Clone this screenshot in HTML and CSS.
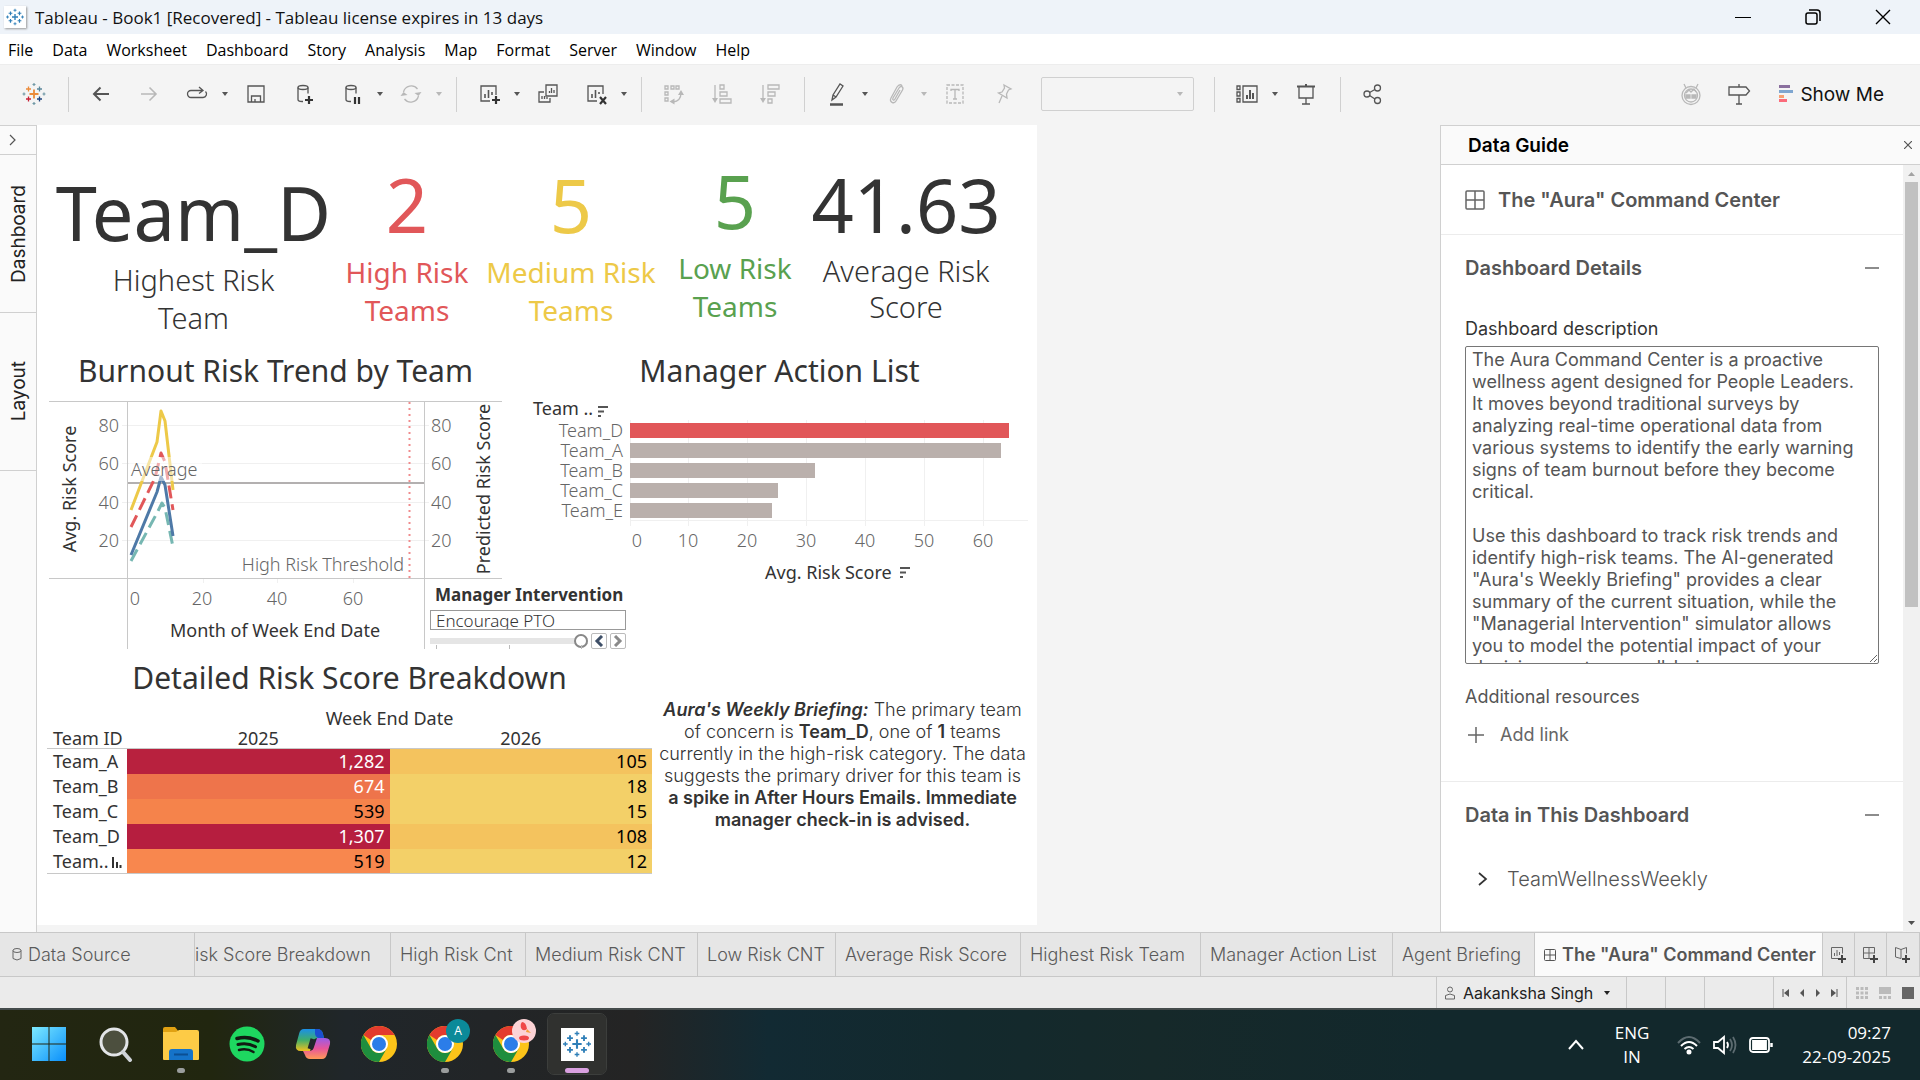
FILE: index.html
```html
<!DOCTYPE html>
<html lang="en">
<head>
<meta charset="utf-8">
<title>Tableau - Book1</title>
<link rel="stylesheet" href="styles.css">
</head>
<body>
<svg class="defs" aria-hidden="true">
  <symbol id="mark" viewBox="0 0 24 24">
    <g fill="none" stroke="currentColor" stroke-width="1.6">
      <path d="M12 8v8M8 12h8" stroke-width="1.8"/>
      <path d="M6 4.5v5M3.500 7h5M18 4.500v5M15.500 7h5M6 14.500v5M3.500 17h5M18 14.500v5M15.500 17h5"/>
      <path d="M12 1v4M10 3h4M12 19v4M10 21h4M2 10v4M0 12h4M22 10v4M20 12h4" stroke-width="1.2"/>
    </g>
  </symbol>
  <symbol id="caret" viewBox="0 0 12 12"><path d="M3 4h6L6 8z" fill="currentColor"/></symbol>
  <symbol id="chrome" viewBox="0 0 36 36">
    <circle cx="18" cy="18" r="18" fill="#fcc419"/>
    <path d="M2.400 9A18 18 0 0 1 33.600 9H18a9 9 0 0 0-8 5z" fill="#e33b2e"/>
    <path d="M2.400 9A18 18 0 0 0 18 36l7.800-13.500A9 9 0 0 1 10.200 22.500z" fill="#1e8e3e"/>
    <circle cx="18" cy="18" r="9" fill="#fff"/><circle cx="18" cy="18" r="7" fill="#2b7de9"/>
  </symbol>
</svg>

<header class="titlebar">
  <span class="app-icon"><svg width="18" height="18"><use href="#mark"/></svg></span>
  <span class="title">Tableau - Book1 [Recovered] - Tableau license expires in 13 days</span>
  <div class="win-buttons">
    <button aria-label="Minimize"><svg width="16" height="16"><path d="M0 8.500h16" stroke="#000"/></svg></button>
    <button aria-label="Restore"><svg width="16" height="16" fill="none" stroke="#000" stroke-width="1.500"><rect x="1" y="4" width="11" height="11" rx="2"/><path d="M4 1h8a3 3 0 0 1 3 3v8"/></svg></button>
    <button aria-label="Close"><svg width="16" height="16"><path d="M1 1l14 14M15 1L1 15" stroke="#000" stroke-width="1.400"/></svg></button>
  </div>
</header>

<nav class="menubar">
  <button>File</button><button>Data</button><button>Worksheet</button><button>Dashboard</button><button>Story</button><button>Analysis</button><button>Map</button><button>Format</button><button>Server</button><button>Window</button><button>Help</button>
</nav>

<div class="toolbar">
  <div class="group first">
    <button aria-label="Start page"><svg viewBox="0 0 24 24" fill="none" stroke-width="1.600"><path d="M12 7.500v9M7.500 12h9" stroke="#eb8b3a" stroke-width="1.800"/><path d="M6.500 4.500v5M4 7h5" stroke="#eb8b3a"/><path d="M17.500 4.500v5M15 7h5" stroke="#5b879b"/><path d="M6.500 14.500v5M4 17h5" stroke="#c72035"/><path d="M17.500 14.500v5M15 17h5" stroke="#1f447e"/><path d="M12 1v3M10.500 2.500h3M12 20v3M10.500 21.500h3M22 10.500v3M20.500 12h3M2 10.500v3M.500 12h3" stroke="#7199a6" stroke-width="1.200"/></svg></button>
  </div>
  <div class="group">
    <button aria-label="Undo"><svg viewBox="0 0 24 24"><path d="M20 12H5M11.500 5.500L5 12l6.500 6.500" stroke-width="2"/></svg></button>
    <button class="off" aria-label="Redo"><svg viewBox="0 0 24 24"><path d="M4 12h15M12.500 5.500L19 12l-6.500 6.500" stroke-width="1.600"/></svg></button>
    <button class="drop" aria-label="Replay"><svg viewBox="0 0 24 24"><path d="M7 15.500H6a3.500 3.500 0 0 1 0-7h11M7 15.500h11a3.500 3.500 0 0 0 2.500-6M14 5l4 3.500-4 3"/></svg><svg class="caret"><use href="#caret"/></svg></button>
    <button aria-label="Save"><svg viewBox="0 0 24 24"><path d="M4 4h16v16H4zM7.500 20v-6h9v6M11 20v-3"/></svg></button>
    <button aria-label="New data source"><svg viewBox="0 0 24 24"><path d="M6 5.500v12c0 1.200 2 2 4 2h1M16 5.500v6"/><ellipse cx="11" cy="5.500" rx="5" ry="2"/><path d="M17 14v8M13 18h8" class="heavy"/></svg></button>
    <button class="drop" aria-label="Pause updates"><svg viewBox="0 0 24 24"><path d="M6 5.500v12c0 1.200 2 2 4 2h1M16 5.500v6"/><ellipse cx="11" cy="5.500" rx="5" ry="2"/><path d="M15 15v7M19 15v7" class="heavy"/></svg><svg class="caret"><use href="#caret"/></svg></button>
    <button class="drop off" aria-label="Refresh"><svg viewBox="0 0 24 24"><path d="M4.500 10a8 8 0 0 1 14-3M19.500 14a8 8 0 0 1-14 3"/><path d="M1.500 14l3-4 4 3zM22.500 10l-3 4-4-3z" fill="currentColor" stroke="none"/></svg><svg class="caret"><use href="#caret"/></svg></button>
  </div>
  <div class="group">
    <button class="drop" aria-label="New worksheet"><svg viewBox="0 0 24 24"><path d="M13 19H4V4h15v9"/><path d="M8 16v-4M11.500 16V8M15 13v-3" stroke-width="1.600"/><path d="M19 14v8M15 18h8" class="heavy"/></svg><svg class="caret"><use href="#caret"/></svg></button>
    <button aria-label="Duplicate sheet"><svg viewBox="0 0 24 24"><path d="M10 3h11v11H10zM8 10H3v10h11v-4M13.500 11V9M15.500 11V6M18 11V8M6 17v-3M8.500 17v-3M11 17v-2"/></svg></button>
    <button class="drop" aria-label="Clear sheet"><svg viewBox="0 0 24 24"><path d="M13 19H4V4h15v8"/><path d="M8 16v-4M11.500 16V8M15 12v-2" stroke-width="1.600"/><path d="M16 15l6 7M22 15l-6 7" class="heavy"/></svg><svg class="caret"><use href="#caret"/></svg></button>
  </div>
  <div class="group">
    <button class="off" aria-label="Swap rows and columns"><svg viewBox="0 0 24 24"><path d="M3 4h3v3H3zM9 4h3v3H9zM14 4h3v3h-3zM3 10h3v3H3zM3 16h3v3H3zM19 11q0 8-8 9"/><path d="M19 8l-3 5h6zM7.500 19.500l5-3v6z" fill="currentColor" stroke="none"/></svg></button>
    <button class="off" aria-label="Sort ascending"><svg viewBox="0 0 24 24"><path d="M5 3v14M10 3h4v4h-4zM10 10h7v4h-7zM10 17h11v4H10z"/><path d="M2 16h6l-3 5z" fill="currentColor" stroke="none"/></svg></button>
    <button class="off" aria-label="Sort descending"><svg viewBox="0 0 24 24"><path d="M5 3v14M10 3h11v4H10zM10 10h7v4h-7zM10 17h4v4h-4z"/><path d="M2 16h6l-3 5z" fill="currentColor" stroke="none"/></svg></button>
  </div>
  <div class="group">
    <button class="drop" aria-label="Highlight"><svg viewBox="0 0 24 24"><path d="M7 18l1-5 7-11 3 2-7 11zM8 13l3 2"/><path d="M5 22.500h13" stroke-width="2.500"/></svg><svg class="caret"><use href="#caret"/></svg></button>
    <button class="drop off" aria-label="Group members"><svg viewBox="0 0 24 24"><path d="M9 16l6-10c2-3 5-1 3.500 2L12 19c-2 3.500-7 1-5-3l6-11c2-3 5-3 5 0M9 16c-1 2 1 3 2 1l5-9"/></svg><svg class="caret"><use href="#caret"/></svg></button>
    <button class="off" aria-label="Show mark labels"><svg viewBox="0 0 24 24"><path d="M4 3h16v18H4z" stroke-dasharray="3 1.500"/><path d="M8 9V7.500h8V9M12 7.500V17M10 17h4"/></svg></button>
    <button class="off" aria-label="Fix axes"><svg viewBox="0 0 24 24"><path d="M13 3l7 4-2.500 1-2 4 .500 4-8.500-5 3.500-1 2.500-4zM11 14l-3 7"/></svg></button>
    <button class="fit off" aria-label="Fit"><svg class="caret"><use href="#caret"/></svg></button>
  </div>
  <div class="group">
    <button class="drop" aria-label="Show or hide cards"><svg viewBox="0 0 24 24"><path d="M2 4h3v3.500H2zM2 10h3v4H2zM2 16.500h3V20H2zM8 4h14v16H8z"/><path d="M12 17v-4M15 17V8M18 17v-6" stroke-width="2"/></svg><svg class="caret"><use href="#caret"/></svg></button>
    <button aria-label="Presentation mode"><svg viewBox="0 0 24 24"><path d="M5 5v11h14V5M12 16v6M8 22h8"/><path d="M3 4.500h18M12 2v2" stroke-width="2"/></svg></button>
  </div>
  <div class="group last">
    <button aria-label="Share"><svg viewBox="0 0 24 24"><circle cx="6" cy="12" r="3"/><circle cx="16.500" cy="6" r="3"/><circle cx="16.500" cy="18.500" r="3"/><path d="M8.600 10.500l5.300-3M8.600 13.500l5.300 3.500"/></svg></button>
  </div>
  <div class="right">
    <button class="off" aria-label="Assistant"><svg viewBox="0 0 24 24"><circle cx="12" cy="13.500" r="9"/><circle cx="12" cy="13.500" r="6.500"/><path d="M5 2l2 4M19 2l-2 4M7 11l3-3 2 2 3-3 2 3"/><path d="M7 13h4v3H7zM13 13h4v3h-4z" fill="currentColor"/></svg></button>
    <button aria-label="Guidance"><svg viewBox="0 0 24 24"><path d="M2 5h17l3.500 4-3.500 4H2zM12 2v3M12 13v9M9 22h6"/></svg></button>
    <button class="showme"><svg viewBox="0 0 14 18"><path d="M0 0h11v3H0z" fill="#8a6f9e"/><path d="M0 5h14v3H0z" fill="#7fa6d0"/><path d="M0 10h5v3H0z" fill="#f7a072"/><path d="M0 14h8v3H0z" fill="#fb6b7b"/></svg>Show Me</button>
  </div>
</div>

<main class="workspace">
  <aside class="rail">
    <button class="expand" aria-label="Expand pane"><svg width="8" height="12" fill="none" stroke="#555" stroke-width="1.200"><path d="M1 1l5 5-5 5"/></svg></button>
    <button class="side-tab"><span>Dashboard</span></button>
    <button class="side-tab"><span>Layout</span></button>
  </aside>

  <section class="canvas">
    <div class="dashboard">
      <div class="kpis">
        <div class="kpi low-set light"><strong>Team_D</strong><span>Highest Risk<br>Team</span></div>
        <div class="kpi red"><strong>2</strong><span>High Risk<br>Teams</span></div>
        <div class="kpi yellow"><strong>5</strong><span>Medium Risk<br>Teams</span></div>
        <div class="kpi high-set green"><strong>5</strong><span>Low Risk<br>Teams</span></div>
        <div class="kpi light"><strong>41.63</strong><span>Average Risk<br>Score</span></div>
      </div>

      <div class="charts">
        <section class="trend">
          <h2>Burnout Risk Trend by Team</h2>
          <svg class="chart" viewBox="0 0 453 248">
            <g stroke="#f0f0f0"><path d="M73 24.500h307M73 62.500h307M73 101.500h307M73 139.500h307M154.500 178v4M228.500 178v4M304.500 178v4"/></g>
            <g class="frame"><path d="M0 .500h453M0 177.500h453M78.500 0v248M375.500 0v248"/></g>
            <path d="M79 82h296" stroke="#b3b0b0" stroke-width="2"/>
            <g class="lines">
              <path d="M82 160L108 112L113 102L116 107L124 146" stroke="#76b7b2" stroke-dasharray="13 6"/>
              <path d="M82 154L108 91L112 76L116 84L124 135" stroke="#4e79a7"/>
              <path d="M82 126L106 77L112 52L116 61L124 109" stroke="#e15759" stroke-dasharray="13 6"/>
              <path d="M82 109L108 41L112 10L116 20L124 89" stroke="#edc948"/>
            </g>
            <path d="M360.500 1v176" stroke="#f08c8d" stroke-width="2" stroke-dasharray="2 4"/>
            <path d="M80 56h73v24H80z" fill="#fff" opacity=".5"/>
            <g class="tick">
              <text x="82" y="75">Average</text>
              <text x="355" y="170" text-anchor="end">High Risk Threshold</text>
              <g text-anchor="end"><text x="70" y="31">80</text><text x="70" y="69">60</text><text x="70" y="108">40</text><text x="70" y="146">20</text></g>
              <text x="382" y="31">80</text><text x="382" y="69">60</text><text x="382" y="108">40</text><text x="382" y="146">20</text>
              <g text-anchor="middle"><text x="86" y="204">0</text><text x="153" y="204">20</text><text x="228" y="204">40</text><text x="304" y="204">60</text></g>
            </g>
            <g class="axis" text-anchor="middle">
              <text x="226" y="236">Month of Week End Date</text>
              <text transform="translate(27 88) rotate(-90)">Avg. Risk Score</text>
              <text transform="translate(441 88) rotate(-90)">Predicted Risk Score</text>
            </g>
          </svg>
          <form class="param">
            <label for="intervention">Manager Intervention</label>
            <input class="value" id="intervention" type="text" value="Encourage PTO">
            <div class="slide">
              <input type="range" min="0" max="2" value="2" aria-label="Manager Intervention step">
              <button type="button" aria-label="Previous"><svg width="10" height="12"><path d="M8 1L3 6l5 5" stroke="#3f5068"/></svg></button>
              <button type="button" aria-label="Next"><svg width="10" height="12"><path d="M2 1l5 5-5 5" stroke="#8a8a8a"/></svg></button>
            </div>
            <svg class="ticks" width="196" height="4"><path d="M6.500 0v4M79.500 0v4M151.500 0v4" stroke="#bbb"/></svg>
          </form>
        </section>

        <section class="actions">
          <h2>Manager Action List</h2>
          <svg class="chart" viewBox="0 0 499 185">
            <g stroke="#f0f0f0"><path d="M100.500 19v106M158.500 19v106M217.500 19v106M276.500 19v106M335.500 19v106M394.500 19v106M453.500 19v106M100 119.500h398"/></g>
            <path d="M100 22h379v15H100z" fill="#e15759"/>
            <path d="M100 42h371v15H100zM100 62h185v15H100zM100 82h148v15H100zM100 102h142v15H100z" fill="#bab0ac"/>
            <g class="tick" text-anchor="end"><text x="93" y="36">Team_D</text><text x="93" y="56">Team_A</text><text x="93" y="76">Team_B</text><text x="93" y="96">Team_C</text><text x="93" y="116">Team_E</text></g>
            <g class="tick" text-anchor="middle"><text x="107" y="146">0</text><text x="158" y="146">10</text><text x="217" y="146">20</text><text x="276" y="146">30</text><text x="335" y="146">40</text><text x="394" y="146">50</text><text x="453" y="146">60</text></g>
            <g class="axis"><text x="3" y="14">Team ..</text><text x="235" y="178">Avg. Risk Score</text></g>
            <path d="M68 6h10M68 10.500h6M68 15h3M370 167h10M370 171.500h6M370 176h3" stroke="#555" stroke-width="2"/>
          </svg>
        </section>
      </div>

      <div class="details">
        <section>
          <h2>Detailed Risk Score Breakdown</h2>
          <table>
            <colgroup><col class="c-team"><col><col></colgroup>
            <thead>
              <tr><td></td><th colspan="2">Week End Date</th></tr>
              <tr><th class="team">Team ID</th><th>2025</th><th>2026</th></tr>
            </thead>
            <tbody>
              <tr><th>Team_A</th><td class="s5">1,282</td><td class="s1">105</td></tr>
              <tr><th>Team_B</th><td class="s4">674</td><td class="s0">18</td></tr>
              <tr><th>Team_C</th><td class="s3">539</td><td class="s0">15</td></tr>
              <tr><th>Team_D</th><td class="s6">1,307</td><td class="s1">108</td></tr>
              <tr><th>Team..<svg width="11" height="12"><path d="M2 1v11M6 6v6M9.500 9v3" stroke="#333" stroke-width="2"/></svg></th><td class="s2">519</td><td class="s0">12</td></tr>
            </tbody>
          </table>
        </section>
        <p class="briefing"><b><i>Aura's Weekly Briefing:</i></b> The primary team<br>of concern is <b>Team_D</b>, one of <b>1</b> teams<br>currently in the high-risk category. The data<br>suggests the primary driver for this team is<br><b>a spike in After Hours Emails. Immediate<br>manager check-in is advised.</b></p>
      </div>
    </div>
  </section>

  <aside class="guide">
    <header><h2>Data Guide</h2><button aria-label="Close Data Guide"><svg width="8" height="8"><path d="M0 0l8 8M8 0L0 8" stroke="#555" stroke-width="1.200"/></svg></button></header>
    <div class="guide-main">
      <div class="guide-body">
        <div class="guide-name"><svg width="20" height="20" fill="none" stroke="#666" stroke-width="1.500"><rect x="1" y="1" width="18" height="18" rx="1"/><path d="M10 1v18M1 10h18"/></svg><h3>The "Aura" Command Center</h3></div>
        <section class="block">
          <div class="head"><h3>Dashboard Details</h3><button aria-label="Collapse details"><svg width="14" height="2"><path d="M0 1h14" stroke="#666" stroke-width="1.500"/></svg></button></div>
          <label for="desc">Dashboard description</label>
          <textarea id="desc">The Aura Command Center is a proactive
wellness agent designed for People Leaders.
It moves beyond traditional surveys by
analyzing real-time operational data from
various systems to identify the early warning
signs of team burnout before they become
critical.

Use this dashboard to track risk trends and
identify high-risk teams. The AI-generated
"Aura's Weekly Briefing" provides a clear
summary of the current situation, while the
"Managerial Intervention" simulator allows
you to model the potential impact of your
decisions on team well-being.</textarea>
          <h4>Additional resources</h4>
          <button class="add"><svg width="18" height="18"><path d="M9 1v16M1 9h16" stroke="#666" stroke-width="1.500"/></svg>Add link</button>
        </section>
        <section class="block">
          <div class="head"><h3>Data in This Dashboard</h3><button aria-label="Collapse data"><svg width="14" height="2"><path d="M0 1h14" stroke="#666" stroke-width="1.500"/></svg></button></div>
          <button class="source"><svg width="10" height="14" fill="none"><path d="M1 1l7 6-7 6" stroke="#333" stroke-width="1.700"/></svg>TeamWellnessWeekly</button>
        </section>
      </div>
      <div class="scroll" aria-hidden="true">
        <svg width="17" height="17"><path d="M5 11h7L8.500 7z" fill="#a3a3a3"/></svg>
        <div class="track"><div class="thumb"></div></div>
        <svg width="17" height="17"><path d="M5 6h7l-3.500 4z" fill="#505050"/></svg>
      </div>
    </div>
  </aside>
</main>

<nav class="sheets">
  <button><svg width="10" height="16" fill="none" stroke="#666"><path d="M1 3.500v8q4 3 8 0v-8"/><ellipse cx="5" cy="3.500" rx="4" ry="2"/></svg>Data Source</button>
  <button class="cut">isk Score Breakdown</button>
  <button>High Risk Cnt</button>
  <button>Medium Risk CNT</button>
  <button>Low Risk CNT</button>
  <button>Average Risk Score</button>
  <button>Highest Risk Team</button>
  <button>Manager Action List</button>
  <button>Agent Briefing</button>
  <button class="active"><svg width="12" height="12" fill="none" stroke="#555"><rect x=".500" y=".500" width="11" height="11" rx="1"/><path d="M6 0v12M0 6h12"/></svg>The "Aura" Command Center</button>
  <button class="new" aria-label="New worksheet"><svg width="18" height="18" fill="none" stroke="#666"><path d="M9 12.500H2.500v-11h11v6M5.500 10V7M8 10V4M10.500 9V6"/><path d="M13 9v8M9 13h8" stroke="#444" stroke-width="2"/></svg></button>
  <button class="new" aria-label="New dashboard"><svg width="18" height="18" fill="none" stroke="#666"><path d="M9 12.500H2.500v-11h11v6M8 1.500v11M2.500 7h11"/><path d="M13 9v8M9 13h8" stroke="#444" stroke-width="2"/></svg></button>
  <button class="new" aria-label="New story"><svg width="18" height="18" fill="none" stroke="#666"><path d="M8 12.500L2.500 11V1.500L8 3.500l5.500-2v6M8 3.500v9"/><path d="M13 9v8M9 13h8" stroke="#444" stroke-width="2"/></svg></button>
</nav>

<div class="status">
  <button class="user"><svg width="10" height="14" fill="none" stroke="#666"><circle cx="5" cy="3.500" r="2.500"/><path d="M.500 13V9.500q4.500-3 9 0V13z"/></svg>Aakanksha Singh<svg class="caret"><use href="#caret"/></svg></button>
  <span class="s-cell"></span><span class="s-cell"></span><span class="m-cell"></span>
  <div class="pager">
    <button aria-label="First"><svg width="8" height="8"><path d="M1 0v8" stroke="#555"/><path d="M7 0v8L2 4z"/></svg></button>
    <button aria-label="Previous"><svg width="8" height="8"><path d="M6 0v8L2 4z"/></svg></button>
    <button aria-label="Next"><svg width="8" height="8"><path d="M2 0v8l4-4z"/></svg></button>
    <button aria-label="Last"><svg width="8" height="8"><path d="M7 0v8" stroke="#555"/><path d="M1 0v8l5-4z"/></svg></button>
  </div>
  <div class="views">
    <button aria-label="Grid view"><svg width="12" height="12" fill="#bbb"><path d="M0 0h3v3H0zM4.500 0h3v3h-3zM9 0h3v3H9zM0 4.500h3v3H0zM4.500 4.500h3v3h-3zM9 4.500h3v3H9zM0 9h3v3H0zM4.500 9h3v3h-3zM9 9h3v3H9z"/></svg></button>
    <button aria-label="Filmstrip view"><svg width="12" height="12" fill="#bbb"><path d="M0 0h12v7H0zM0 9h3v3H0zM4.500 9h3v3h-3zM9 9h3v3H9z"/></svg></button>
    <button aria-label="Sheet view"><svg width="12" height="12" fill="#666"><path d="M0 0h12v12H0z"/></svg></button>
  </div>
</div>

<footer class="taskbar">
  <div class="apps">
    <button aria-label="Start"><svg viewBox="0 0 36 36"><defs><linearGradient id="w" x2="1" y2="1"><stop stop-color="#7deaff"/><stop offset="1" stop-color="#0a8ffb"/></linearGradient></defs><path d="M1 1h16.500v16.500H1zM18.500 1H35v16.500H18.500zM1 18.500h16.500V35H1zM18.500 18.500H35V35H18.500z" fill="url(#w)"/></svg></button>
    <button aria-label="Search"><svg viewBox="0 0 36 36" fill="none"><circle cx="17" cy="16" r="13" fill="#4c4f3e" stroke="#e3e5e8" stroke-width="3"/><path d="M26 26l7 8" stroke="#cfd3d8" stroke-width="4" stroke-linecap="round"/></svg></button>
    <button class="run" aria-label="File Explorer"><svg viewBox="0 0 36 36"><path d="M0 3q0-2 2-2h10l4 5H0z" fill="#e0a112"/><path d="M0 6h13l3-2h18q2 0 2 2v27q0 1-1 1H1q-1 0-1-1z" fill="#fdcb46"/><path d="M6 34V26q0-3 3-3h18q3 0 3 3v8z" fill="#1573c9"/><path d="M11 28.500h14" stroke="#0b4f93" stroke-width="2"/></svg></button>
    <button aria-label="Spotify"><svg viewBox="0 0 36 36" fill="none" stroke="#111a12" stroke-linecap="round"><circle cx="18" cy="18" r="17.500" fill="#1ed760" stroke="none"/><path d="M8 12.500q11-3 21 2.500" stroke-width="3.500"/><path d="M9 18.500q9-2.500 17.500 2.200" stroke-width="3"/><path d="M10 24q8-2 14.500 2" stroke-width="2.500"/></svg></button>
    <button aria-label="Copilot"><svg viewBox="0 0 36 36"><defs><linearGradient id="cl" x2="0" y2="1"><stop stop-color="#1b8fe8"/><stop offset=".5" stop-color="#3fae6a"/><stop offset="1" stop-color="#f2c11d"/></linearGradient><linearGradient id="cr" x2="0" y2="1"><stop stop-color="#9a5be8"/><stop offset=".5" stop-color="#e7559a"/><stop offset="1" stop-color="#ff9a57"/></linearGradient></defs><path d="M9 3h13q5 0 6 5l1 4h-6q-4 0-5 4l-3 9H6q-6 0-5-6L4 8q1-5 5-5z" fill="url(#cl)"/><path d="M20 3h2q5 0 6 5l1 4h-5q-3 0-4-4z" fill="#1b4fd0"/><path d="M27 33H15q-4 0-5-4l-2-4h6q4 0 5-4l3-9h8q6 0 5 6l-3 10q-1 5-5 5z" fill="url(#cr)"/><path d="M18 13l-3 10" stroke="#20262a" stroke-width="5"/></svg></button>
    <button aria-label="Chrome"><svg><use href="#chrome"/></svg></button>
    <button class="run" aria-label="Chrome, profile A"><svg><use href="#chrome"/></svg><span class="badge">A</span></button>
    <button class="run" aria-label="Chrome, second profile"><svg><use href="#chrome"/></svg><span class="badge pink"><svg viewBox="0 0 24 24"><path d="M10 3q4 0 5 7-4 3-6-1-1-4 1-6z" fill="#f04848"/><path d="M15 10l4 4-5-1z" fill="#f6a13a"/><ellipse cx="12" cy="19" rx="5" ry="2.500" fill="#f04848"/></svg></span></button>
    <button class="run current" aria-label="Tableau"><span class="tile"><svg><use href="#mark"/></svg></span></button>
  </div>
  <div class="tray">
    <button aria-label="Hidden icons"><svg width="18" height="12" fill="none" stroke="#fff" stroke-width="2"><path d="M2 10l7-8 7 8"/></svg></button>
    <button class="lang">ENG<br>IN</button>
    <button class="net" aria-label="Network, volume, battery">
      <svg width="24" height="20" fill="none" stroke="#fff" stroke-width="2"><path d="M1 8q11-12 22 0" stroke="#5c6b70"/><path d="M4 11q8-8 16 0M7.500 14q4.500-4 9 0"/><circle cx="12" cy="17" r="1.500" fill="#fff"/></svg>
      <svg width="24" height="20" fill="none" stroke="#fff" stroke-width="1.800"><path d="M1 7h4l6-5v16l-6-5H1zM14 7q2 3 0 6"/><path d="M17 4q4 6 0 12M20 2q5 8 0 16" stroke="#5c6b70"/></svg>
      <svg width="24" height="20" fill="none" stroke="#fff" stroke-width="1.800"><rect x="1" y="3" width="19" height="14" rx="3"/><path d="M4 6h13v8H4z" fill="#fff"/><path d="M22.500 8v4" stroke-width="2.500"/></svg>
    </button>
    <button class="clock">09:27<br>22-09-2025</button>
  </div>
</footer>
</body>
</html>
```
FILE: styles.css
```css
* { box-sizing: border-box; }
body {
  margin: 0;
  min-height: 100vh;
  display: flex;
  flex-direction: column;
  background: #f4f4f4;
  font-family: Inter, sans-serif;
  overflow: hidden;
}
button { padding: 0; border: 0; background: none; color: inherit; font: inherit; }
h2, h3, h4, p { margin: 0; }
svg { display: block; flex: none; }
.defs { position: absolute; width: 0; height: 0; }
.caret { width: 12px; height: 12px; }

/* Window chrome */
.titlebar {
  display: flex; align-items: center; height: 34px; padding-left: 4px;
  background: #eef3f9; font: 17px "Open Sans", sans-serif; color: #111;
}
.app-icon { padding: 2px; margin-right: 9px; background: #fff; box-shadow: 1px 1px 2px #999; color: #2f7fb8; }
.title { flex: 1; }
.win-buttons { display: flex; padding-right: 2px; }
.win-buttons button { width: 70px; height: 34px; display: grid; place-items: center; }
.menubar {
  display: flex; align-items: center; gap: 19px; height: 30px; padding: 2px 8px 0;
  background: #fff; font: 16px "Open Sans", sans-serif; color: #000;
}

/* Toolbar */
.toolbar { display: flex; align-items: center; height: 61px; padding-bottom: 2px; border-top: 1px solid #ededed; color: #555; }
.group { display: flex; align-items: center; height: 35px; padding-left: 20px; border-right: 1px solid #d0d0d0; }
.group.first { padding-left: 22px; }
.group.last { border-right: 0; }
.group button { display: flex; align-items: center; gap: 10px; margin-right: 24px; }
.group button.drop { margin-right: 13px; }
.group button:last-child { margin-right: 22px; }
.group button.drop:last-child { margin-right: 11px; }
.toolbar button > svg:not(.caret) { width: 24px; height: 24px; fill: none; stroke: currentColor; stroke-width: 1.3; }
.toolbar .heavy { stroke: #333; stroke-width: 2.2; }
.toolbar .off { color: #b8b8b8; }
.group button.fit {
  width: 153px; height: 34px; margin: 0 20px 0 2px; padding-right: 7px; justify-content: flex-end;
  border: 1px solid #d0d0d0; border-radius: 2px;
}
.right { display: flex; align-items: center; gap: 24px; margin-left: auto; padding-right: 36px; }
.right .showme { display: flex; align-items: center; gap: 7px; margin-left: 4px; font-size: 19px; color: #111; }
.toolbar .showme > svg:not(.caret) { width: 14px; height: 18px; stroke: none; }

/* Workspace */
.workspace { flex: 1; min-height: 0; display: grid; grid-template-columns: 37px minmax(0, 1fr) 480px; }
.rail { display: flex; flex-direction: column; background: #fafafa; border-right: 1px solid #d0d0d0; border-top: 1px solid #d0d0d0; }
.expand { height: 29px; padding-left: 9px; border-bottom: 1px solid #d0d0d0; }
.side-tab { height: 158px; display: grid; place-items: center; border-bottom: 1px solid #d0d0d0; font-size: 19px; color: #222; }
.side-tab span { writing-mode: vertical-rl; transform: rotate(180deg); }
.canvas { overflow: hidden; }

.dashboard {
  max-width: 1000px; height: 800px; background: #fff; color: #333;
  font-family: "Noto Sans", sans-serif; font-size: 18px;
}
.dashboard h2 { font-size: 30px; line-height: 42px; font-weight: 400; text-align: center; white-space: nowrap; }
.kpis { display: grid; grid-template-columns: 263fr 164fr 164fr 164fr 178fr; height: 225px; padding: 0 42px 0 25px; }
.kpi { display: flex; flex-direction: column; align-items: center; gap: 8px; min-width: 0; padding-top: 40px; text-align: center; white-space: nowrap; }
.kpi.low-set { padding-top: 48px; }
.kpi.high-set { padding-top: 36px; }
.kpi strong { font-size: 74px; line-height: 80px; font-weight: 400; }
.kpi span { font-size: 28px; line-height: 38px; }
.kpi.light span { font-weight: 300; font-size: 29px; line-height: 36px; }
.kpi.low-set span { line-height: 38px; }
.kpi.red { color: #e15759; }
.kpi.yellow { color: #edc948; }
.kpi.green { color: #59a14f; }

.charts { display: grid; grid-template-columns: 453fr 499fr; gap: 28px; padding: 0 8px 0 12px; height: 307px; }
.trend { position: relative; }
.chart { width: 100%; height: auto; margin-top: 9px; font-size: 18px; overflow: visible; }
.frame { stroke: #c8c8c8; }
.lines path { fill: none; stroke-width: 3; stroke-linejoin: round; }
.tick { fill: #666; font-weight: 300; }
.axis { fill: #333; }

/* Floating parameter control over the trend chart's corner */
.param { position: absolute; left: 381px; top: 232px; width: 196px; }
.param label { display: block; padding: 2px 0 4px 5px; font-size: 17px; line-height: 22px; font-weight: 700; white-space: nowrap; }
.param .value {
  display: block; width: 100%; height: 20px; padding: 1px 5px 0; border: 1px solid #999;
  background: #fff; font: 300 17px/20px "Noto Sans", sans-serif; color: #333;
}
.slide { display: flex; align-items: center; gap: 3px; padding-top: 3px; }
.slide input { flex: 1; min-width: 0; height: 16px; margin: 0; appearance: none; background: none; }
.slide input::-webkit-slider-runnable-track { height: 6px; background: #e5e5e5; }
.slide input::-webkit-slider-thumb { appearance: none; width: 14px; height: 14px; margin-top: -4px; border: 2px solid #888; border-radius: 50%; background: #fff; }
.slide button { width: 16px; height: 16px; display: grid; place-items: center; border: 1px solid #bbb; border-radius: 2px; }
.slide button svg { fill: none; stroke-width: 3; }
.ticks { margin-top: -4px; }

.details { display: grid; grid-template-columns: 605fr 375fr; gap: 3px; padding: 0 7px 0 10px; }
table { width: 100%; margin-top: 7px; border-collapse: collapse; table-layout: fixed; border-bottom: 1px solid #c8c8c8; }
.c-team { width: 80px; }
th { font-weight: 400; padding: 0; }
th, td { height: 25px; line-height: 24px; }
thead th, thead td { height: 20px; line-height: 20px; }
thead tr:first-child th { padding-top: 2px; }
thead tr:last-child { border-bottom: 1px solid #c8c8c8; }
tbody th, th.team { padding-left: 6px; text-align: left; white-space: nowrap; }
th svg { display: inline-block; margin-left: 3px; }
tbody td { padding: 0 5px; text-align: right; color: #000; }
.s0 { background: #f3d068; }
.s1 { background: #f4c35e; }
.s2 { background: #f8874e; }
.s3 { background: #f5834b; }
tbody .s4 { background: #ee744b; color: #fff; }
tbody .s5 { background: #b8213e; color: #fff; }
tbody .s6 { background: #b61e3f; color: #fff; }
.briefing { padding-top: 42px; text-align: center; font: 300 18px/22px Inter, sans-serif; white-space: nowrap; }
.briefing b { font-weight: 600; }

/* Data Guide */
.guide { display: flex; flex-direction: column; min-height: 0; border: solid #d0d0d0; border-width: 1px 0 0 1px; background: #fff; color: #555; }
.guide > header { display: flex; align-items: center; justify-content: space-between; height: 39px; padding: 0 8px 0 27px; background: #fafafa; border-bottom: 1px solid #d0d0d0; }
.guide h2 { font-size: 19px; font-weight: 600; color: #000; }
.guide h3 { font-size: 20px; font-weight: 600; line-height: 24px; }
.guide-main { flex: 1; min-height: 0; display: flex; }
.guide-body { flex: 1; min-height: 0; overflow: hidden; }
.guide-name { display: flex; align-items: center; gap: 13px; height: 70px; padding-left: 24px; border-bottom: 1px solid #ececec; }
.block { padding: 21px 24px 0; border-bottom: 1px solid #ececec; font-size: 18px; line-height: 22px; }
.head { display: flex; align-items: center; justify-content: space-between; height: 24px; }
.block label { display: block; padding: 38px 0 6px; color: #333; }
textarea {
  display: block; width: 100%; height: 318px; padding: 2px 6px; border: 1px solid #767676; border-radius: 2px;
  font: 18px/22px Inter, sans-serif; color: #555; resize: vertical; overflow: hidden; white-space: pre;
}
.block h4 { padding-top: 22px; font-size: 18px; font-weight: 400; }
.add, .source { display: flex; align-items: center; }
.add { gap: 15px; margin: 16px 0 35px 2px; color: #666; }
.source { gap: 19px; margin: 40px 0 40px 13px; font-size: 20px; line-height: 24px; font-weight: 300; }
.scroll { display: flex; flex-direction: column; width: 17px; background: #f1f1f1; }
.track { flex: 1; padding: 0 2px; }
.thumb { height: 58%; background: #c1c1c1; }

/* Sheet tabs and status bar */
.sheets {
  display: grid; grid-template-columns: 195fr 196fr 135fr 172fr 138fr 185fr 180fr 192fr 142fr 288fr 32fr 32fr 33fr;
  height: 45px; border: solid #c8c8c8; border-width: 1px 0; background: #e6e6e6; font-size: 18px; color: #5a5a5a;
}
.sheets button { display: flex; align-items: center; gap: 6px; min-width: 0; padding-left: 9px; border-right: 1px solid #c8c8c8; white-space: nowrap; overflow: hidden; font-weight: 300; }
.sheets button:first-child { padding-left: 12px; }
.sheets button.cut { padding-left: 0; }
.sheets button.active { background: #fafafa; font-weight: 600; color: #555; }
.sheets button.new { padding-left: 6px; }
.status { display: flex; justify-content: flex-end; height: 31px; background: #ebebeb; font-size: 16px; color: #222; }
.status > * { border-left: 1px solid #c8c8c8; }
.user { display: flex; align-items: center; gap: 8px; width: 190px; padding-left: 8px; }
.s-cell { width: 39px; }
.m-cell { width: 69px; }
.pager { display: flex; align-items: center; gap: 8px; width: 73px; padding-left: 8px; fill: #555; }
.views { display: flex; align-items: center; gap: 11px; width: 74px; padding-left: 9px; }

/* Taskbar */
.taskbar {
  display: flex; justify-content: space-between; height: 72px; border-top: 2px solid #454c4c; color: #fff;
  background: linear-gradient(90deg, #232612 0, #21260f 11%, #20262a 18%, #242424 33%, #122a33 40%, #13292d 50%, #16292a 60%, #12282c 75%, #12282c 100%);
  font: 17px/24px "Open Sans", sans-serif;
}
.apps { display: flex; gap: 8px; padding: 4px 0 0 20px; }
.apps button { position: relative; width: 58px; height: 60px; display: grid; place-items: center; border-radius: 6px; }
.apps button > svg { width: 36px; height: 36px; }
.apps .run::after { content: ""; position: absolute; left: 25px; bottom: 1px; width: 8px; height: 5px; border-radius: 3px; background: #9a9d9d; }
.apps .current { background: #30312f; outline: 1px solid #3c3e3c; }
.apps .current::after { left: 17px; width: 24px; background: #d9a0e0; }
.tile { display: grid; place-items: center; width: 33px; height: 33px; background: #fff; color: #2f7fb8; }
.tile svg { width: 28px; height: 28px; }
.badge { position: absolute; right: 4px; top: 5px; width: 24px; height: 24px; border-radius: 50%; background: #0b8a99; font-size: 12px; }
.badge.pink { background: #fcd3d6; }
.tray { display: flex; align-items: center; padding-right: 29px; }
.lang { margin-left: 30px; }
.net { display: flex; gap: 12px; margin: 0 29px 0 28px; }
.clock { text-align: right; }
```
